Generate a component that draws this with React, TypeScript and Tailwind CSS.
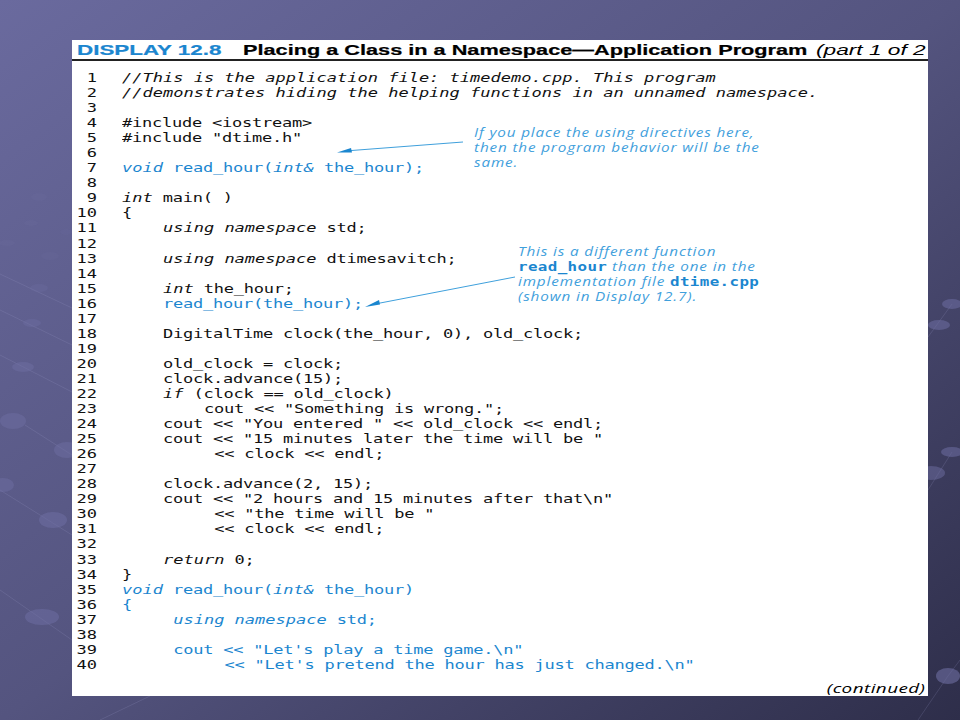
const mono = "font-['DejaVu_Sans_Mono',monospace]";

type Seg = { t: string; i?: boolean };
type Line = { indent?: number; segs?: Seg[]; blue?: boolean };

const txt = (t: string): Seg => ({ t });
const it = (t: string): Seg => ({ t, i: true });

const lines: Line[] = [
  { segs: [it("//This is the application file: timedemo.cpp. This program")] },
  { segs: [it("//demonstrates hiding the helping functions in an unnamed namespace.")] },
  {},
  { segs: [txt("#include <iostream>")] },
  { segs: [txt('#include "dtime.h"')] },
  {},
  { blue: true, segs: [it("void"), txt(" read_hour("), it("int&"), txt(" the_hour);")] },
  {},
  { segs: [it("int"), txt(" main( )")] },
  { segs: [txt("{")] },
  { indent: 4, segs: [it("using namespace"), txt(" std;")] },
  {},
  { indent: 4, segs: [it("using namespace"), txt(" dtimesavitch;")] },
  {},
  { indent: 4, segs: [it("int"), txt(" the_hour;")] },
  { indent: 4, blue: true, segs: [txt("read_hour(the_hour);")] },
  {},
  { indent: 4, segs: [txt("DigitalTime clock(the_hour, 0), old_clock;")] },
  {},
  { indent: 4, segs: [txt("old_clock = clock;")] },
  { indent: 4, segs: [txt("clock.advance(15);")] },
  { indent: 4, segs: [it("if"), txt(" (clock == old_clock)")] },
  { indent: 8, segs: [txt('cout << "Something is wrong.";')] },
  { indent: 4, segs: [txt('cout << "You entered " << old_clock << endl;')] },
  { indent: 4, segs: [txt('cout << "15 minutes later the time will be "')] },
  { indent: 9, segs: [txt("<< clock << endl;")] },
  {},
  { indent: 4, segs: [txt("clock.advance(2, 15);")] },
  { indent: 4, segs: [txt('cout << "2 hours and 15 minutes after that\\n"')] },
  { indent: 9, segs: [txt('<< "the time will be "')] },
  { indent: 9, segs: [txt("<< clock << endl;")] },
  {},
  { indent: 4, segs: [it("return"), txt(" 0;")] },
  { segs: [txt("}")] },
  { blue: true, segs: [it("void"), txt(" read_hour("), it("int&"), txt(" the_hour)")] },
  { blue: true, segs: [txt("{")] },
  { indent: 5, blue: true, segs: [it("using namespace"), txt(" std;")] },
  {},
  { indent: 5, blue: true, segs: [txt('cout << "Let\'s play a time game.\\n"')] },
  { indent: 10, blue: true, segs: [txt('<< "Let\'s pretend the hour has just changed.\\n"')] },
];

function Backdrop() {
  // cx, cy, rx, ry, opacity
  const spots = [
    [39, 197, 8, 4, 0.18], [31, 223, 7, 3, 0.18], [7, 243, 8, 3, 0.18], [50, 256, 9, 4, 0.18],
    [66, 232, 6, 3, 0.15], [39, 288, 9, 4, 0.3], [32, 323, 9, 4, 0.4], [23, 367, 11, 5, 0.5],
    [13, 421, 13, 8, 0.5], [67, 450, 13, 8, 0.5], [3, 485, 11, 7, 0.5], [53, 520, 14, 8, 0.55],
    [42, 617, 17, 8, 0.55],
    [952, 304, 10, 5, 0.55], [939, 325, 11, 5, 0.55], [952, 452, 11, 5, 0.55], [931, 473, 14, 7, 0.5],
    [948, 676, 12, 8, 0.6],
  ];
  return (
    <svg className="absolute inset-0 h-full w-full" viewBox="0 0 960 720">
      <g stroke="#9a9aca" strokeOpacity="0.2" fill="none">
        <path d="M0 274 L72 308" />
        <path d="M0 310 L72 345" />
        <path d="M0 355 L72 392" />
        <path d="M25 425 L72 455" />
        <path d="M0 490 L72 535" />
        <path d="M0 590 L72 640" />
        <path d="M928 337 L952 304" />
        <path d="M928 490 L952 452" />
        <path d="M918 720 L948 676" />
        <path d="M948 676 L960 660" />
        <path d="M100 720 L150 696" />
      </g>
      {spots.map(([x, y, rx, ry, o]) => (
        <ellipse key={`${x}-${y}`} cx={x} cy={y} rx={rx} ry={ry} fill="#6e6ea2" fillOpacity={o} />
      ))}
    </svg>
  );
}

const note = "font-['Open_Sans',sans-serif] text-[12.5px] leading-[15px] tracking-[0.7px] text-[#3fa0dc] italic";
const noteCode = `font-bold not-italic ${mono} text-[13px] leading-none tracking-[0.3px] text-[#1b86cf]`;

export default function App() {
  return (
    <div className="relative h-[720px] w-[960px] overflow-hidden bg-gradient-to-br from-[#6a6a9e] via-[#54547f] to-[#2e2e4a] pt-10 pl-[72px]">
      <Backdrop />
      <div className="relative flex h-[656px] w-[856px] flex-col bg-white">
        <div className="flex h-[21px] items-center overflow-hidden border-b-2 border-[#222] pl-[5px] whitespace-nowrap font-['Liberation_Sans',sans-serif] text-[14px] leading-none">
          <span className="w-[166px] shrink-0 origin-left scale-x-[1.6] font-bold text-[#1b86cf] [-webkit-text-stroke:0.2px]">DISPLAY 12.8</span>
          <span className="w-[573px] shrink-0 origin-left scale-x-[1.55] font-bold text-black [-webkit-text-stroke:0.2px]">Placing a Class in a Namespace—Application Program</span>
          <span className="shrink-0 origin-left scale-x-[1.62] font-normal text-black italic">(part 1 of 2</span>
        </div>
        <div className={`mt-[9px] flex flex-col text-[13px] leading-[15.05px] text-[#111] ${mono}`}>
          {lines.map((line, n) => (
            <div key={n} className="flex h-[15.05px] whitespace-pre">
              <span className="w-[25px] shrink-0 origin-right scale-x-[1.308] text-right">{n + 1}</span>
              <span className={`ml-[25px] origin-left scale-x-[1.308] ${line.blue ? "text-[#1b86cf]" : ""}`}>
                {" ".repeat(line.indent ?? 0)}
                {line.segs?.map((s, j) => (
                  <span key={j} className={s.i ? "italic" : "tracking-[-0.18px]"}>{s.t}</span>
                ))}
              </span>
            </div>
          ))}
        </div>
        <div className={`absolute top-[85px] left-[402px] origin-left scale-x-[1.22] whitespace-nowrap ${note}`}>
          <div>If you place the using directives here,</div>
          <div>then the program behavior will be the</div>
          <div>same.</div>
        </div>
        <div className={`absolute top-[204px] left-[446px] origin-left scale-x-[1.22] whitespace-nowrap ${note}`}>
          <div>This is a different function</div>
          <div><span className={noteCode}>read_hour</span> than the one in the</div>
          <div>implementation file <span className={noteCode}>dtime.cpp</span></div>
          <div>(shown in Display 12.7).</div>
        </div>
        <svg className="absolute inset-0 h-full w-full" viewBox="72 40 856 656">
          <path d="M463 142 L345 151" stroke="#3fa0dc" fill="none" />
          <path d="M337 152.5 L351 148 L352 152.5 Z" fill="#1b86cf" />
          <path d="M515 277 L375 304" stroke="#3fa0dc" fill="none" />
          <path d="M365 307 L379 300 L380 304.5 Z" fill="#1b86cf" />
        </svg>
        <div className="absolute right-[3px] bottom-0 origin-right scale-x-[1.4] font-['Open_Sans',sans-serif] text-[13.5px] leading-[16px] tracking-[0.3px] text-black italic">(continued)</div>
      </div>
    </div>
  );
}
